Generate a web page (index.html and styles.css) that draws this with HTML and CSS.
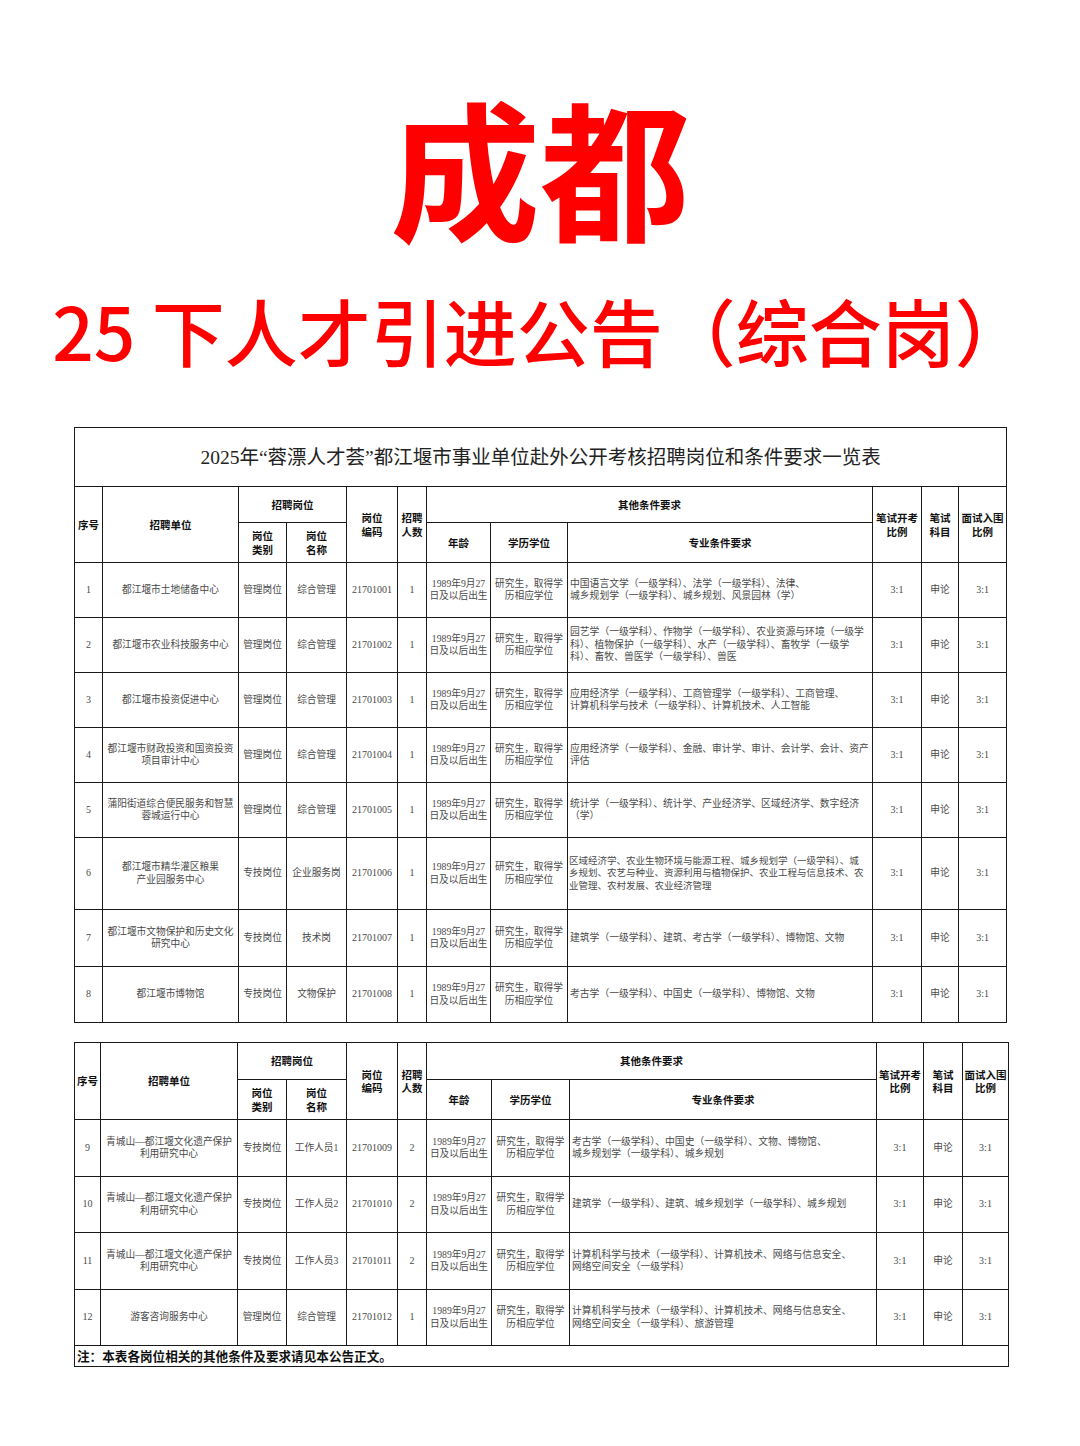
FILE: index.html
```html
<!DOCTYPE html>
<html lang="zh-CN">
<head>
<meta charset="utf-8">
<title>成都 25下人才引进公告（综合岗）</title>
<link rel="stylesheet" href="styles.css">
</head>
<body>
<div class="hero">
  <h1 class="city">成都</h1>
  <h2 class="sub">25 下人才引进公告（综合岗）</h2>
</div>

<div class="sheet">
<table class="t t1">
  <colgroup>
    <col class="k1"><col class="k2"><col class="k3"><col class="k4"><col class="k5"><col class="k6">
    <col class="k7"><col class="k8"><col class="k9"><col class="k10"><col class="k11"><col class="k12">
  </colgroup>
  <tr class="rt"><td colspan="12" class="ttl">2025年“蓉漂人才荟”都江堰市事业单位赴外公开考核招聘岗位和条件要求一览表</td></tr>
  <tr class="rh1">
    <th rowspan="2">序号</th>
    <th rowspan="2">招聘单位</th>
    <th colspan="2">招聘岗位</th>
    <th rowspan="2">岗位<br>编码</th>
    <th rowspan="2">招聘<br>人数</th>
    <th colspan="3">其他条件要求</th>
    <th rowspan="2">笔试开考<br>比例</th>
    <th rowspan="2">笔试<br>科目</th>
    <th rowspan="2">面试入围<br>比例</th>
  </tr>
  <tr class="rh2">
    <th>岗位<br>类别</th>
    <th>岗位<br>名称</th>
    <th>年龄</th>
    <th>学历学位</th>
    <th>专业条件要求</th>
  </tr>
  <tr class="r55">
    <td class="num">1</td><td>都江堰市土地储备中心</td><td>管理岗位</td><td>综合管理</td><td class="num">21701001</td><td class="num">1</td>
    <td>1989年9月27<br>日及以后出生</td><td>研究生，取得学<br>历相应学位</td>
    <td class="spec">中国语言文学（一级学科）、法学（一级学科）、法律、<br>城乡规划学（一级学科）、城乡规划、风景园林（学）</td>
    <td class="num">3:1</td><td>申论</td><td class="num">3:1</td>
  </tr>
  <tr class="r55">
    <td class="num">2</td><td>都江堰市农业科技服务中心</td><td>管理岗位</td><td>综合管理</td><td class="num">21701002</td><td class="num">1</td>
    <td>1989年9月27<br>日及以后出生</td><td>研究生，取得学<br>历相应学位</td>
    <td class="spec">园艺学（一级学科）、作物学（一级学科）、农业资源与环境（一级学<br>科）、植物保护（一级学科）、水产（一级学科）、畜牧学（一级学<br>科）、畜牧、兽医学（一级学科）、兽医</td>
    <td class="num">3:1</td><td>申论</td><td class="num">3:1</td>
  </tr>
  <tr class="r55">
    <td class="num">3</td><td>都江堰市投资促进中心</td><td>管理岗位</td><td>综合管理</td><td class="num">21701003</td><td class="num">1</td>
    <td>1989年9月27<br>日及以后出生</td><td>研究生，取得学<br>历相应学位</td>
    <td class="spec">应用经济学（一级学科）、工商管理学（一级学科）、工商管理、<br>计算机科学与技术（一级学科）、计算机技术、人工智能</td>
    <td class="num">3:1</td><td>申论</td><td class="num">3:1</td>
  </tr>
  <tr class="r55">
    <td class="num">4</td><td>都江堰市财政投资和国资投资<br>项目审计中心</td><td>管理岗位</td><td>综合管理</td><td class="num">21701004</td><td class="num">1</td>
    <td>1989年9月27<br>日及以后出生</td><td>研究生，取得学<br>历相应学位</td>
    <td class="spec">应用经济学（一级学科）、金融、审计学、审计、会计学、会计、资产<br>评估</td>
    <td class="num">3:1</td><td>申论</td><td class="num">3:1</td>
  </tr>
  <tr class="r55">
    <td class="num">5</td><td>蒲阳街道综合便民服务和智慧<br>蓉城运行中心</td><td>管理岗位</td><td>综合管理</td><td class="num">21701005</td><td class="num">1</td>
    <td>1989年9月27<br>日及以后出生</td><td>研究生，取得学<br>历相应学位</td>
    <td class="spec">统计学（一级学科）、统计学、产业经济学、区域经济学、数字经济<br>（学）</td>
    <td class="num">3:1</td><td>申论</td><td class="num">3:1</td>
  </tr>
  <tr class="r72">
    <td class="num">6</td><td>都江堰市精华灌区粮果<br>产业园服务中心</td><td>专技岗位</td><td>企业服务岗</td><td class="num">21701006</td><td class="num">1</td>
    <td>1989年9月27<br>日及以后出生</td><td>研究生，取得学<br>历相应学位</td>
    <td class="spec tight">区域经济学、农业生物环境与能源工程、城乡规划学（一级学科）、城<br>乡规划、农艺与种业、资源利用与植物保护、农业工程与信息技术、农<br>业管理、农村发展、农业经济管理</td>
    <td class="num">3:1</td><td>申论</td><td class="num">3:1</td>
  </tr>
  <tr class="r57">
    <td class="num">7</td><td>都江堰市文物保护和历史文化<br>研究中心</td><td>专技岗位</td><td>技术岗</td><td class="num">21701007</td><td class="num">1</td>
    <td>1989年9月27<br>日及以后出生</td><td>研究生，取得学<br>历相应学位</td>
    <td class="spec">建筑学（一级学科）、建筑、考古学（一级学科）、博物馆、文物</td>
    <td class="num">3:1</td><td>申论</td><td class="num">3:1</td>
  </tr>
  <tr class="r56">
    <td class="num">8</td><td>都江堰市博物馆</td><td>专技岗位</td><td>文物保护</td><td class="num">21701008</td><td class="num">1</td>
    <td>1989年9月27<br>日及以后出生</td><td>研究生，取得学<br>历相应学位</td>
    <td class="spec">考古学（一级学科）、中国史（一级学科）、博物馆、文物</td>
    <td class="num">3:1</td><td>申论</td><td class="num">3:1</td>
  </tr>
</table>

<table class="t t2">
  <colgroup>
    <col class="k1"><col class="k2"><col class="k3"><col class="k4"><col class="k5"><col class="k6">
    <col class="k7"><col class="k8"><col class="k9"><col class="k10"><col class="k11"><col class="k12">
  </colgroup>
  <tr class="rh1b">
    <th rowspan="2">序号</th>
    <th rowspan="2">招聘单位</th>
    <th colspan="2">招聘岗位</th>
    <th rowspan="2">岗位<br>编码</th>
    <th rowspan="2">招聘<br>人数</th>
    <th colspan="3">其他条件要求</th>
    <th rowspan="2">笔试开考<br>比例</th>
    <th rowspan="2">笔试<br>科目</th>
    <th rowspan="2">面试入围<br>比例</th>
  </tr>
  <tr class="rh2">
    <th>岗位<br>类别</th>
    <th>岗位<br>名称</th>
    <th>年龄</th>
    <th>学历学位</th>
    <th>专业条件要求</th>
  </tr>
  <tr class="r57">
    <td class="num">9</td><td>青城山—都江堰文化遗产保护<br>利用研究中心</td><td>专技岗位</td><td>工作人员1</td><td class="num">21701009</td><td class="num">2</td>
    <td>1989年9月27<br>日及以后出生</td><td>研究生，取得学<br>历相应学位</td>
    <td class="spec">考古学（一级学科）、中国史（一级学科）、文物、博物馆、<br>城乡规划学（一级学科）、城乡规划</td>
    <td class="num">3:1</td><td>申论</td><td class="num">3:1</td>
  </tr>
  <tr class="r56">
    <td class="num">10</td><td>青城山—都江堰文化遗产保护<br>利用研究中心</td><td>专技岗位</td><td>工作人员2</td><td class="num">21701010</td><td class="num">2</td>
    <td>1989年9月27<br>日及以后出生</td><td>研究生，取得学<br>历相应学位</td>
    <td class="spec">建筑学（一级学科）、建筑、城乡规划学（一级学科）、城乡规划</td>
    <td class="num">3:1</td><td>申论</td><td class="num">3:1</td>
  </tr>
  <tr class="r57">
    <td class="num">11</td><td>青城山—都江堰文化遗产保护<br>利用研究中心</td><td>专技岗位</td><td>工作人员3</td><td class="num">21701011</td><td class="num">2</td>
    <td>1989年9月27<br>日及以后出生</td><td>研究生，取得学<br>历相应学位</td>
    <td class="spec">计算机科学与技术（一级学科）、计算机技术、网络与信息安全、<br>网络空间安全（一级学科）</td>
    <td class="num">3:1</td><td>申论</td><td class="num">3:1</td>
  </tr>
  <tr class="r56">
    <td class="num">12</td><td>游客咨询服务中心</td><td>管理岗位</td><td>综合管理</td><td class="num">21701012</td><td class="num">1</td>
    <td>1989年9月27<br>日及以后出生</td><td>研究生，取得学<br>历相应学位</td>
    <td class="spec">计算机科学与技术（一级学科）、计算机技术、网络与信息安全、<br>网络空间安全（一级学科）、旅游管理</td>
    <td class="num">3:1</td><td>申论</td><td class="num">3:1</td>
  </tr>
  <tr class="rn"><td colspan="12" class="note">注：本表各岗位相关的其他条件及要求请见本公告正文。</td></tr>
</table>
</div>
</body>
</html>
```

FILE: styles.css
```css
html, body {
  margin: 0;
  padding: 0;
  background: #ffffff;
}
body {
  width: 1080px;
  min-height: 1446px;
  font-family: "Liberation Serif", "Noto Sans CJK SC", serif;
  color: #444;
}
.hero {
  padding-top: 90px;
  text-align: center;
  color: #ff0000;
  font-family: "Noto Sans CJK SC", "Noto Sans", sans-serif;
}
.city {
  margin: 0;
  font-size: 150px;
  line-height: 150px;
  font-weight: 700;
}
.sub {
  margin: 53px 0 0 0;
  font-size: 73px;
  line-height: 73px;
  font-weight: 500;
  white-space: nowrap;
}
.sheet {
  padding: 61px 0 0 74px;
}
.t {
  border-collapse: collapse;
  table-layout: fixed;
}
.t1 { width: 932px; }
.t2 { width: 934px; margin-top: 19px; }
.t td, .t th {
  border: 1.5px solid #1a1a1a;
  padding: 0 1px;
  text-align: center;
  vertical-align: middle;
  white-space: nowrap;
  overflow: hidden;
}
.t th {
  font-family: "Noto Sans CJK SC", "Noto Sans", sans-serif;
  font-weight: 700;
  font-size: 10.5px;
  line-height: 13.5px;
  color: #111;
}
.t td {
  font-size: 9.7px;
  line-height: 12.5px;
  color: #4a4a4a;
}
.t td.spec {
  text-align: left;
  padding-left: 2px;
  font-size: 9.8px;
}
.t td.spec.tight {
  font-size: 9.5px;
  padding-left: 1px;
  padding-right: 0;
}
.t td.num {
  font-size: 10px;
}
.t1 .k1 { width: 28px; }
.t1 .k2 { width: 136px; }
.t1 .k3 { width: 48px; }
.t1 .k4 { width: 60px; }
.t1 .k5 { width: 51px; }
.t1 .k6 { width: 29px; }
.t1 .k7 { width: 64px; }
.t1 .k8 { width: 77px; }
.t1 .k9 { width: 305px; }
.t1 .k10 { width: 49px; }
.t1 .k11 { width: 37px; }
.t1 .k12 { width: 48px; }
.t2 .k1 { width: 26px; }
.t2 .k2 { width: 137px; }
.t2 .k3 { width: 49px; }
.t2 .k4 { width: 60px; }
.t2 .k5 { width: 51px; }
.t2 .k6 { width: 29px; }
.t2 .k7 { width: 65px; }
.t2 .k8 { width: 78px; }
.t2 .k9 { width: 307px; }
.t2 .k10 { width: 47px; }
.t2 .k11 { width: 39px; }
.t2 .k12 { width: 46px; }
.rt { height: 59px; }
.rh1 { height: 36px; }
.rh1b { height: 37px; }
.rh2 { height: 40px; }
.r55 { height: 55px; }
.r56 { height: 56px; }
.r57 { height: 57px; }
.r72 { height: 72px; }
.rn { height: 21px; }
.t td.ttl {
  font-size: 19.5px;
  line-height: 24px;
  color: #222;
  padding-top: 1px;
}
.t td.note {
  text-align: left;
  padding-left: 2px;
  font-family: "Noto Sans CJK SC", "Noto Sans", sans-serif;
  font-weight: 700;
  font-size: 12.6px;
  line-height: 16px;
  color: #111;
}
```
